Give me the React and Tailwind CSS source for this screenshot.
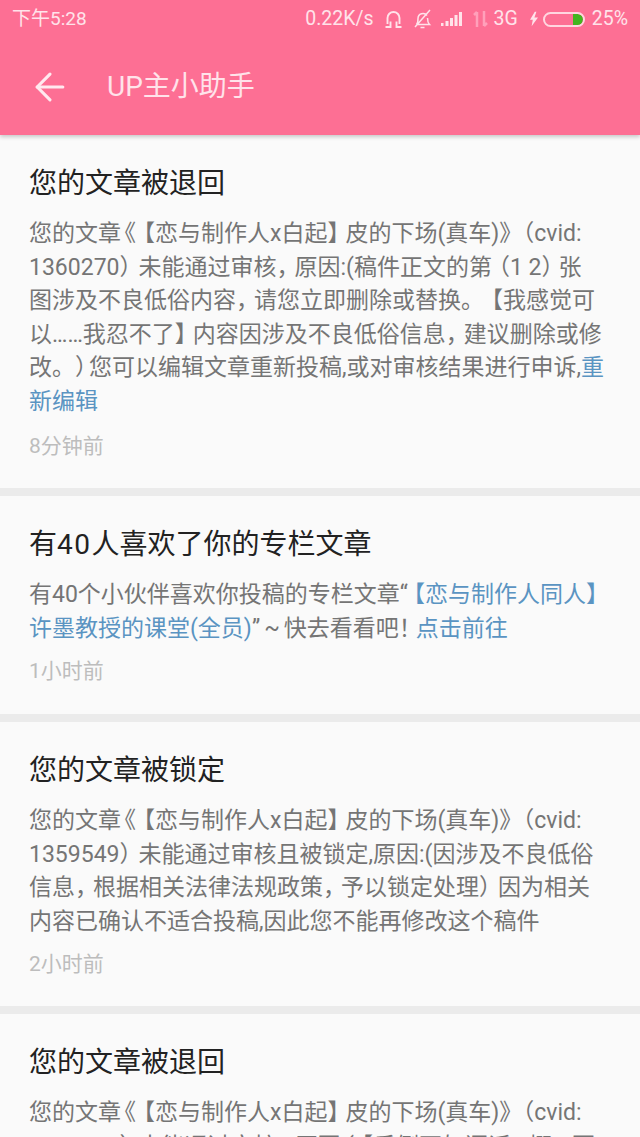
import { ArrowLeft } from "lucide-react";

const cjk = "font-['Roboto','Noto_Sans_CJK_SC',sans-serif]";

// the punctuation in the screenshot is tighter than Noto's full width cells
const punct = {
  "《": "ml-[-8px]",
  "》": "mr-[-7px]",
  "【": "ml-[-4px]",
  "】": "mr-[-5px]",
  "（": "ml-[-4px]",
  "）": "mr-[-4px]",
  "，": "mr-[-5px]",
  "！": "mr-[-6px]",
  "~": "mx-[4px]",
  "。）": "mr-[-9px]",
  "（1 2）": "ml-[-5px] mr-[-6px]",
};

function Txt({ children }) {
  const parts = children.split(/(（1 2）|。）|[《》【】（），！~])/);
  return parts.map((part, i) =>
    punct[part] ? (
      <span key={i} className={punct[part]}>
        {part}
      </span>
    ) : (
      part
    )
  );
}

const Link = ({ children }) => (
  <span className="text-[#5a94c2]">
    <Txt>{children}</Txt>
  </span>
);

// status bar icons
function StatusIcons() {
  return (
    <div className="flex items-center text-[19.5px] text-[#ffe3ea]">
      <span className="mr-[10px]">0.22K/s</span>
      <svg width="19" height="20" viewBox="0 0 19 20" fill="none" stroke="#ffe3ea" strokeWidth="1.9" className="mr-[10px]">
        <path d="M3.5 15V9a6 6 0 0 1 12 0v6" />
        <path d="M1.5 18h5v-5.5M17.5 18h-5v-5.5" />
      </svg>
      <svg width="19" height="20" viewBox="0 0 19 20" fill="none" stroke="#ffe3ea" strokeWidth="1.5" className="mr-[9px]">
        <path d="M3.5 15.5c1.5-1.5 1.5-3 1.5-6a5 5 0 0 1 9-3M14.5 9c0 3 .5 5 2 6.5H3.5M7.5 18.5h4M2 18L17 1" />
      </svg>
      <svg width="22" height="16" viewBox="0 0 22 16" fill="#ffe3ea" className="mr-[10px]">
        <rect x="0" y="12" width="2.5" height="3" />
        <rect x="4.5" y="10" width="3" height="5" />
        <rect x="9" y="7" width="3" height="8" />
        <rect x="13.5" y="4" width="3" height="11" />
        <rect x="18" y="1" width="3" height="14" />
      </svg>
      <svg width="15" height="20" viewBox="0 0 15 20" fill="none" stroke="#ffa0ba" strokeWidth="2.5" className="mr-[6px]">
        <path d="M4 18V3M1 6l3-3M11 2v15m3-3l-3 3" />
      </svg>
      <span className="mr-[12px]">3G</span>
      <svg width="8" height="16" viewBox="0 0 10 18" fill="#ffe3ea" className="mr-[5px]">
        <path d="M6 0L0 10h3.5L2 18l8-11H5.5L8 0z" />
      </svg>
      <div className="mr-[7px] flex h-[15px] w-[42px] justify-end overflow-hidden rounded-full border-2 border-[#ffd6e0]">
        <div className="h-full w-[10px] rounded-r-full bg-[#43b51f]"></div>
      </div>
      <span>25%</span>
    </div>
  );
}

function Card({ title, lines, time, height, timeGap = "mt-[11px]" }) {
  return (
    <div className={`${height} bg-[#fafafa] pl-[29px] pt-[30px]`}>
      <h2 className="text-[28px] leading-[38px] text-[#222222]">{title}</h2>
      <div className="mt-[14px] text-[23px] leading-[33.5px] text-[#757575] [text-spacing-trim:space-all]">
        {lines.map((line, i) => (
          <div key={i} className="whitespace-nowrap">
            {line}
          </div>
        ))}
      </div>
      {time && <p className={`${timeGap} text-[21px] leading-[30px] text-[#bdbdbd]`}>{time}</p>}
    </div>
  );
}

export default function App() {
  return (
    <div className={`flex h-[1137px] w-[640px] flex-col overflow-hidden bg-[#ebebeb] ${cjk}`}>
      {/* Pink header */}
      <header className="relative z-10 h-[135px] shrink-0 bg-[#fd6f94] shadow-[0_2px_4px_rgba(0,0,0,0.2)]">
        <div className="flex h-[38px] items-center justify-between pl-[12px] pr-[12px]">
          <span className="text-[19px] text-[#ffe3ea]">下午5:28</span>
          <StatusIcons />
        </div>
        <div className="flex h-[97px] items-center pl-[28px]">
          <ArrowLeft size={44} strokeWidth={1.7} className="text-[#ffe9ef]" />
          <h1 className="ml-[35px] text-[28px] text-[#ffe3ea]">UP主小助手</h1>
        </div>
      </header>

      <main className="flex flex-col gap-[8px]">
        <Card
          height="h-[353px]"
          timeGap="mt-[13px]"
          title="您的文章被退回"
          lines={[
            <Txt>您的文章《【恋与制作人x白起】皮的下场(真车)》（cvid:</Txt>,
            <Txt>1360270）未能通过审核，原因:(稿件正文的第（1 2）张</Txt>,
            <Txt>图涉及不良低俗内容，请您立即删除或替换。【我感觉可</Txt>,
            <Txt>以……我忍不了】内容因涉及不良低俗信息，建议删除或修</Txt>,
            <><Txt>改。）您可以编辑文章重新投稿,或对审核结果进行申诉,</Txt><Link>重</Link></>,
            <Link>新编辑</Link>,
          ]}
          time="8分钟前"
        />
        <Card
          height="h-[218px]"
          title={<>有<span className="tracking-[1.5px]">40</span>人喜欢了你的专栏文章</>}
          lines={[
            <>有40个小伙伴喜欢你投稿的专栏文章“<span className="ml-[-2px]"><Link>【恋与制作人同人】</Link></span></>,
            <><Link>许墨教授的课堂(全员)</Link>”<Txt>~快去看看吧！</Txt><Link>点击前往</Link></>,
          ]}
          time="1小时前"
        />
        <Card
          height="h-[284px]"
          title="您的文章被锁定"
          lines={[
            <Txt>您的文章《【恋与制作人x白起】皮的下场(真车)》（cvid:</Txt>,
            <Txt>1359549）未能通过审核且被锁定,原因:(因涉及不良低俗</Txt>,
            <Txt>信息，根据相关法律法规政策，予以锁定处理）因为相关</Txt>,
            <Txt>内容已确认不适合投稿,因此您不能再修改这个稿件</Txt>,
          ]}
          time="2小时前"
        />
        <Card
          height="h-[200px]"
          title="您的文章被退回"
          lines={[
            <Txt>您的文章《【恋与制作人x白起】皮的下场(真车)》（cvid:</Txt>,
            <Txt>1359549）未能通过审核，原因:(【反侧不如逗话，慨 K要</Txt>,
          ]}
        />
      </main>
    </div>
  );
}
